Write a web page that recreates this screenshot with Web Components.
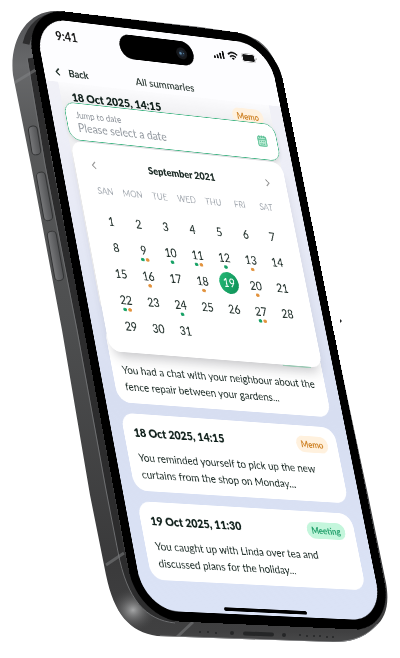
<!DOCTYPE html>
<html lang="en">
<head>
<meta charset="utf-8">
<meta name="viewport" content="width=device-width, initial-scale=1">
<title>All summaries</title>
<style>
  body {
    margin: 0;
    background: #fff;
    color: #1c2b26;
    font-family: Lato, "Liberation Sans", sans-serif;
    overflow-x: hidden;
  }
</style>
</head>
<body>
<phone-mockup>
  <app-screen>
    <status-bar slot="status"></status-bar>
    <nav-bar slot="nav" heading="All summaries"></nav-bar>
    <date-picker slot="picker" month="September 2021" days="31" selected="19"></date-picker>
    <summary-card class="first" heading="18 Oct 2025, 14:15" tag="Memo"></summary-card>
    <summary-card class="covered">You had a chat with your neighbour about the fence repair between your gardens...</summary-card>
    <summary-card heading="18 Oct 2025, 14:15" tag="Memo">You reminded yourself to pick up the new curtains from the shop on Monday...</summary-card>
    <summary-card heading="19 Oct 2025, 11:30" tag="Meeting">You caught up with Linda over tea and discussed plans for the holiday...</summary-card>
  </app-screen>
</phone-mockup>

<script>
// Where the four corners of the display land on the 400 x 658 stage
const STAGE_WIDTH = 400;
const CORNERS = [[34, 17], [268, 45], [384, 621], [145, 610]];

// Projective transform that maps a w x h box onto four corners
function project(w, h, [[x0, y0], [x1, y1], [x2, y2], [x3, y3]]) {
  const sx = x0 - x1 + x2 - x3;
  const sy = y0 - y1 + y2 - y3;
  const dx1 = x1 - x2, dx2 = x3 - x2;
  const dy1 = y1 - y2, dy2 = y3 - y2;
  const den = dx1 * dy2 - dx2 * dy1;
  const g = (sx * dy2 - dx2 * sy) / den;
  const k = (dx1 * sy - sx * dy1) / den;
  return `matrix3d(${[
    (x1 - x0 + g * x1) / w, (y1 - y0 + g * y1) / w, 0, g / w,
    (x3 - x0 + k * x3) / h, (y3 - y0 + k * y3) / h, 0, k / h,
    0, 0, 1, 0,
    x0, y0, 0, 1
  ].join(',')})`;
}

class PhoneMockup extends HTMLElement {
  connectedCallback() {
    this.attachShadow({ mode: 'open' });
    this.shadowRoot.innerHTML = `
      <style>
        :host {
          display: block;
          position: relative;
          width: 100%;
          aspect-ratio: 400 / 658;
          overflow: hidden;
        }
        .body {
          display: block;
          width: 100%;
          height: auto;
        }
        .display {
          position: absolute;
          top: 0;
          left: 0;
          width: 393px;
          transform-origin: 0 0;
          border-radius: 54px;
          background: #000;
          box-shadow: 0 0 0 14px #000;
        }
      </style>
      <svg class="body" viewBox="0 0 400 658" aria-hidden="true">
        <defs>
          <linearGradient id="side" x1="0" y1="0" x2="0" y2="1">
            <stop offset="0" stop-color="#4c4d4f"/>
            <stop offset=".1" stop-color="#68696b"/>
            <stop offset=".2" stop-color="#58595a"/>
            <stop offset=".5" stop-color="#4d4e4f"/>
            <stop offset=".85" stop-color="#3a3a3b"/>
            <stop offset=".96" stop-color="#404041"/>
            <stop offset="1" stop-color="#565758"/>
          </linearGradient>
          <radialGradient id="shine">
            <stop offset="0" stop-color="#a5a6a7"/>
            <stop offset="1" stop-color="#4a4a4b" stop-opacity="0"/>
          </radialGradient>
          <linearGradient id="key">
            <stop offset="0" stop-color="#77787a"/>
            <stop offset="1" stop-color="#515254"/>
          </linearGradient>
          <clipPath id="shell">
            <path d="M57 11 L200 27 L233 32 C262 36 274 52 280 77 L300 165 L333 330 L368 495 L386 583 C390 605 385 618 376 626 C362 640 348 642 333 642 L157 636 C130 632 114 614 106 575 L90 495 L62 330 L31 165 L13 75 C9 42 26 10 57 11Z"/>
          </clipPath>
        </defs>
        <g clip-path="url(#shell)">
          <rect width="400" height="658" fill="url(#side)"/>
          <ellipse cx="133" cy="610" rx="24" ry="22" fill="url(#shine)"/>
          <path d="M26 44 C30 26 42 16 58 17" fill="none" stroke="#2d2d2e" stroke-width="7"/>
          <path d="M31 58 L49 165 L81 330 L110 490 L121 552 C130 598 148 616 175 620" fill="none" stroke="#2c2c2d" stroke-width="7"/>
          <path d="M27 58 L45 165 L77 330 L106 490 L118 552 C127 600 146 620 175 623" fill="none" stroke="#6e6f71" stroke-width="1"/>
          <path d="M14 83 L37 69 M106 565 L124 553 M177 637 L193 622" stroke="#848587" stroke-width="3" opacity=".5"/>
          <path d="M160 637 L333 643 C352 643 368 637 378 625" fill="none" stroke="#858688" stroke-width="3"/>
        </g>
        <g fill="url(#key)" stroke="#333435">
          <rect x="30" y="126" width="9" height="29" rx="4" transform="rotate(-9 34 140)"/>
          <rect x="40" y="172" width="9" height="49" rx="4" transform="rotate(-10 44 196)"/>
          <rect x="51" y="231" width="9" height="50" rx="4" transform="rotate(-10 55 256)"/>
        </g>
        <g fill="#252627">
          <rect x="243" y="632" width="31" height="4" rx="2" transform="rotate(2 258 634)"/>
          <circle cx="200" cy="632" r="1"/><circle cx="208" cy="632" r="1"/><circle cx="216" cy="633" r="1"/>
          <circle cx="232" cy="633" r="2"/><circle cx="284" cy="635" r="2"/>
          <circle cx="300" cy="635" r="1"/><circle cx="307" cy="636" r="1"/><circle cx="314" cy="636" r="1"/>
          <circle cx="320" cy="636" r="1"/><circle cx="327" cy="637" r="1"/><circle cx="333" cy="637" r="1"/>
          <path d="M340 319 L342 321 L340 323Z"/>
        </g>
      </svg>
      <div class="display"><slot></slot></div>
    `;
    this.display = this.shadowRoot.querySelector('.display');
    this.place();
    window.addEventListener('resize', () => this.place());
  }

  place() {
    const scale = this.clientWidth / STAGE_WIDTH;
    const corners = CORNERS.map(([x, y]) => [x * scale, y * scale]);
    this.display.style.transform = project(393, 852, corners);
  }
}

class AppScreen extends HTMLElement {
  connectedCallback() {
    this.attachShadow({ mode: 'open' });
    this.shadowRoot.innerHTML = `
      <style>
        :host {
          display: flex;
          flex-direction: column;
          position: relative;
          min-height: 852px;
          box-sizing: border-box;
          border-radius: 54px;
          overflow: hidden;
          background: linear-gradient(#f1f1f7 10%, #e9ebf6 30%, #d7def1 65%, #dbe3f6);
        }
        header {
          background: #fdfdff;
        }
        main {
          display: flex;
          flex-direction: column;
          gap: 15px;
          padding: 0 20px;
        }
        .popup {
          position: absolute;
          top: 123px;
          left: 22px;
          right: 18px;
        }
        .home {
          width: 136px;
          height: 5px;
          margin: auto auto 4px;
          border-radius: 3px;
          background: #000;
        }
      </style>
      <header><slot name="status"></slot><slot name="nav"></slot></header>
      <main><slot></slot></main>
      <div class="popup"><slot name="picker"></slot></div>
      <div class="home"></div>
    `;
  }
}

class StatusBar extends HTMLElement {
  connectedCallback() {
    this.attachShadow({ mode: 'open' });
    this.shadowRoot.innerHTML = `
      <style>
        :host {
          display: flex;
          align-items: center;
          justify-content: space-between;
          position: relative;
          height: 48px;
          padding: 0 24px 14px 30px;
          color: #111;
        }
        time {
          font-size: 18px;
          font-weight: 700;
        }
        .icons {
          display: flex;
          align-items: center;
          gap: 6px;
        }
        .island {
          display: flex;
          align-items: center;
          justify-content: flex-end;
          position: absolute;
          top: 10px;
          left: calc(50% - 62px);
          width: 124px;
          height: 37px;
          box-sizing: border-box;
          padding-right: 10px;
          border-radius: 19px;
          background: #000;
        }
      </style>
      <time>9:41</time>
      <div class="island">
        <svg width="20" height="20" viewBox="0 0 20 20">
          <circle cx="10" cy="10" r="9" fill="#17191d"/>
          <circle cx="10" cy="10" r="5" fill="#1e2a38"/>
          <circle cx="8" cy="10" r="2" fill="#5d87a8"/>
          <circle cx="13" cy="10" r="1" fill="#5d87a8"/>
        </svg>
      </div>
      <div class="icons">
        <svg width="18" height="12" viewBox="0 0 18 12" fill="currentColor">
          <rect x="0" y="8" width="3" height="4" rx="1"/>
          <rect x="5" y="6" width="3" height="6" rx="1"/>
          <rect x="10" y="3" width="3" height="9" rx="1"/>
          <rect x="15" y="0" width="3" height="12" rx="1"/>
        </svg>
        <svg width="18" height="14" viewBox="0 0 18 14" fill="none" stroke="currentColor" stroke-width="2.4">
          <path d="M1 5 Q9 -2 17 5 M4 8.500 Q9 4 14 8.500"/>
          <path d="M6.500 10.500 Q9 8.500 11.500 10.500 L9 13Z" fill="currentColor" stroke="none"/>
        </svg>
        <svg width="27" height="14" viewBox="0 0 27 14">
          <rect x=".5" y=".5" width="23" height="13" rx="4" fill="none" stroke="#bbb"/>
          <rect x="2" y="2" width="20" height="10" rx="2" fill="currentColor"/>
          <path d="M25 5 Q27 7 25 9Z" fill="#aaa"/>
        </svg>
      </div>
    `;
  }
}

class NavBar extends HTMLElement {
  connectedCallback() {
    this.attachShadow({ mode: 'open' });
    this.shadowRoot.innerHTML = `
      <style>
        :host {
          display: grid;
          grid-template-columns: 1fr auto 1fr;
          align-items: center;
          height: 30px;
          padding: 2px 12px 0 18px;
        }
        a {
          display: flex;
          align-items: center;
          gap: 14px;
          color: inherit;
          text-decoration: none;
          font-size: 15px;
          font-weight: 700;
        }
        h1 {
          margin: 0;
          font-size: 16px;
          font-weight: 600;
          color: #33403b;
        }
      </style>
      <a href="#">
        <svg width="8" height="12" viewBox="0 0 8 12" fill="none" stroke="currentColor" stroke-width="2"><path d="M7 1 L2 6 L7 11"/></svg>
        Back
      </a>
      <h1>${this.getAttribute('heading')}</h1>
    `;
  }
}

class SummaryCard extends HTMLElement {
  connectedCallback() {
    const heading = this.getAttribute('heading') || '';
    const tag = this.getAttribute('tag');
    this.attachShadow({ mode: 'open' });
    this.shadowRoot.innerHTML = `
      <style>
        :host {
          display: block;
          padding: 14px 16px 12px;
          border-radius: 20px;
          background: #fff;
        }
        :host(.first) {
          min-height: 320px;
          padding: 8px 14px 12px 18px;
          border-radius: 0 0 20px 20px;
          background: linear-gradient(#fbfbfd, #f0f0f2 30px);
        }
        header {
          display: flex;
          align-items: center;
          justify-content: space-between;
          min-height: 26px;
          margin-bottom: 10px;
        }
        /* only the lower rim of this tag shows below the calendar */
        :host(.covered) header {
          background: linear-gradient(#b5efd2, #b5efd2) calc(100% - 2px) 0 / 48px 25px no-repeat;
        }
        h2 {
          margin: 0;
          font-size: 17px;
          line-height: 26px;
          font-weight: 800;
          color: #10201b;
        }
        .tag {
          padding: 0 8px;
          border-radius: 12px;
          font-size: 13px;
          line-height: 24px;
          font-weight: 700;
        }
        .memo {
          background: #fff1de;
          color: #cf8429;
        }
        .meeting {
          background: #c4f6dc;
          color: #23a06c;
        }
        p {
          margin: 0;
          font-size: 16px;
          line-height: 24px;
        }
      </style>
      <header>
        ${heading ? `<h2>${heading}</h2>` : ''}
        ${tag ? `<span class="tag ${tag.toLowerCase()}">${tag}</span>` : ''}
      </header>
      <p><slot></slot></p>
    `;
  }
}

// Entries per day: m = meeting, o = memo
const ENTRIES = {
  9: 'mo', 10: 'm', 11: 'mo', 12: 'm', 13: 'o', 16: 'o',
  18: 'o', 20: 'o', 22: 'mo', 24: 'm', 27: 'mo'
};

class DatePicker extends HTMLElement {
  connectedCallback() {
    const selected = Number(this.getAttribute('selected'));
    const weekdays = ['SAN', 'MON', 'TUE', 'WED', 'THU', 'FRI', 'SAT'];
    const days = Array.from({ length: Number(this.getAttribute('days')) }, (_, i) => i + 1);
    this.attachShadow({ mode: 'open' });
    this.shadowRoot.innerHTML = `
      <style>
        :host {
          display: block;
        }
        button, input {
          font: inherit;
          color: inherit;
          border: 0;
          padding: 0;
          background: none;
        }
        .field {
          display: flex;
          align-items: center;
          justify-content: space-between;
          height: 56px;
          box-sizing: border-box;
          padding: 0 16px;
          border: 1px solid #3fb583;
          border-radius: 17px;
          background: #fff;
          box-shadow: 0 3px 6px rgba(40, 60, 55, .12);
        }
        .text {
          display: flex;
          flex-direction: column;
          flex: 1;
          min-width: 0;
        }
        label {
          font-size: 13px;
          line-height: 16px;
          color: #8c9299;
        }
        input {
          height: 20px;
          font-size: 17px;
          outline: 0;
        }
        input::placeholder {
          color: #92989f;
          opacity: 1;
        }
        .panel {
          margin-top: 2px;
          padding: 20px 20px;
          border-radius: 17px;
          background: #fff;
          box-shadow: 0 14px 18px -8px rgba(60, 60, 70, .3);
        }
        .month {
          display: flex;
          align-items: center;
          justify-content: space-between;
          height: 24px;
          padding: 0 7px;
          color: #888;
        }
        h3 {
          margin: 0;
          font-size: 15px;
          font-weight: 800;
          color: #1c2b26;
        }
        .week, .days {
          display: grid;
          grid-template-columns: repeat(7, 1fr);
          text-align: center;
        }
        .week {
          margin: 18px 0 17px;
          font-size: 13px;
          line-height: 16px;
          color: #a5abb2;
        }
        .day {
          display: flex;
          align-items: center;
          justify-content: center;
          position: relative;
          height: 38px;
          font-size: 17px;
          font-weight: 500;
        }
        .selected span {
          width: 32px;
          line-height: 32px;
          border-radius: 50%;
          color: #fff;
          background: linear-gradient(120deg, #25bb78, #0c8d54);
        }
        .dots {
          display: flex;
          gap: 2px;
          justify-content: center;
          position: absolute;
          left: 0;
          right: 0;
          bottom: 2px;
        }
        .dots i {
          width: 6px;
          height: 5px;
          border-radius: 50%;
        }
        .m { background: #16a165; }
        .o { background: #e2923c; }
      </style>
      <div class="field">
        <div class="text">
          <label for="date">Jump to date</label>
          <input id="date" type="text" placeholder="Please select a date">
        </div>
        <button aria-label="Open calendar">
          <svg width="18" height="18" viewBox="0 0 18 18" fill="none" stroke="#55bd91" stroke-width="1.500">
            <rect x="2" y="3" width="14" height="14" rx="2" fill="#b9ead3"/>
            <path d="M5 1 V5 M9 1 V5 M13 1 V5 M2 7 H16 M5 10 H7 M8 10 H10 M11 10 H13 M5 14 H7 M8 14 H10 M11 14 H13"/>
          </svg>
        </button>
      </div>
      <div class="panel">
        <div class="month">
          <button aria-label="Previous month"><svg width="8" height="12" viewBox="0 0 8 12" fill="none" stroke="currentColor" stroke-width="1.500"><path d="M7 1 L2 6 L7 11"/></svg></button>
          <h3>${this.getAttribute('month')}</h3>
          <button aria-label="Next month"><svg width="8" height="12" viewBox="0 0 8 12" fill="none" stroke="currentColor" stroke-width="1.500"><path d="M1 1 L6 6 L1 11"/></svg></button>
        </div>
        <div class="week">${weekdays.map(name => `<span>${name}</span>`).join('')}</div>
        <div class="days">
          ${days.map(day => `
            <button class="day${day === selected ? ' selected' : ''}">
              <span>${day}</span>
              ${ENTRIES[day] ? `<div class="dots">${[...ENTRIES[day]].map(kind => `<i class="${kind}"></i>`).join('')}</div>` : ''}
            </button>`).join('')}
        </div>
      </div>
    `;
  }
}

customElements.define('phone-mockup', PhoneMockup);
customElements.define('app-screen', AppScreen);
customElements.define('status-bar', StatusBar);
customElements.define('nav-bar', NavBar);
customElements.define('summary-card', SummaryCard);
customElements.define('date-picker', DatePicker);
</script>
</body>
</html>
